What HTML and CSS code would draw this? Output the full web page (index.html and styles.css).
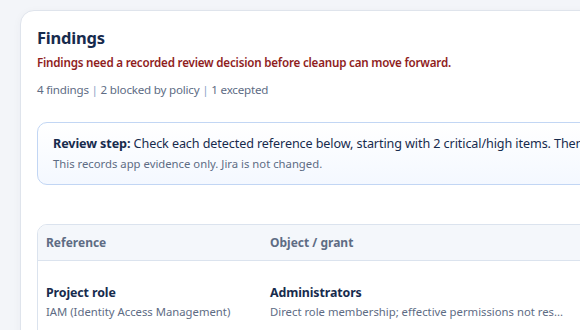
FILE: index.html
```html
<!DOCTYPE html>
<html lang="en">

<head>
    <meta charset="UTF-8" />
    <title>Findings</title>
    <link rel="stylesheet" href="styles.css">
</head>

<body>
    <div class="card">
        <h1>Findings</h1>
        <p class="warning">Findings need a recorded review decision before cleanup can move forward.</p>
        <p class="stats">4 findings <span class="sep">|</span> 2 blocked by policy <span class="sep">|</span> 1 excepted</p>

        <div class="step">
            <p class="step-main"><strong>Review step:</strong> Check each detected reference below, starting with 2 critical/high items. Then record a decision for each one.</p>
            <p class="step-note">This records app evidence only. Jira is not changed.</p>
        </div>

        <div class="table">
            <div class="row head">
                <div class="col-ref">Reference</div>
                <div class="col-obj">Object / grant</div>
            </div>
            <div class="row">
                <div class="col-ref">
                    <div class="cell-title">Project role</div>
                    <div class="cell-sub">IAM (Identity Access Management)</div>
                </div>
                <div class="col-obj">
                    <div class="cell-title">Administrators</div>
                    <div class="cell-sub">Direct role membership; effective permissions not res...</div>
                </div>
            </div>
        </div>
    </div>
</body>

</html>
```

FILE: styles.css
```css
body {
    margin: 0;
    font-family: 'Noto Sans', 'Open Sans', sans-serif;
    background: #f3f5f9;
    color: #172b4d;
    overflow: hidden;
}

/* Main panel */
.card {
    margin: 10px 0 0 20px;
    width: 900px;
    min-height: 400px;
    background: #fff;
    border: 1px solid #dfe4ec;
    border-radius: 14px;
    padding: 15px 16px 0 16px;
    box-sizing: border-box;
    box-shadow: 0 2px 10px rgba(23, 43, 77, 0.04);
}

h1 {
    margin: 0;
    font-size: 16.5px;
    font-weight: 700;
    letter-spacing: -0.2px;
    color: #172b4d;
    line-height: 24px;
}

.warning {
    margin: 4px 0 0 0;
    font-size: 11.6px;
    font-weight: 600;
    letter-spacing: -0.2px;
    color: #8f1d1d;
    line-height: 18px;
}

.stats {
    margin: 9px 0 0 0;
    font-size: 11.6px;
    letter-spacing: -0.2px;
    color: #5e6c84;
    line-height: 18px;
}

.sep {
    color: #8aa4c8;
}

.step {
    margin-top: 23px;
    border: 1px solid #c2d6f4;
    border-radius: 10px;
    background: linear-gradient(to bottom, #ffffff, #f4f8ff);
    padding: 11px 15px 11px 15px;
}

.step p {
    margin: 0;
    white-space: nowrap;
}

.step-main {
    font-size: 12.6px;
    letter-spacing: -0.1px;
    line-height: 20px;
    color: #172b4d;
}

.step-main strong {
    font-weight: 700;
}

.step-note {
    font-size: 11.3px;
    line-height: 19px;
    color: #5e6c84;
}

.table {
    margin-top: 39px;
    border: 1px solid #dbe3ee;
    border-radius: 10px;
    overflow: hidden;
}

.row {
    display: flex;
}

.row.head {
    background: #f4f7fb;
    border-bottom: 1px solid #dbe3ee;
    height: 35px;
    align-items: center;
    font-size: 12px;
    font-weight: 700;
    color: #5e6c84;
}

.col-ref {
    width: 232px;
    padding: 0 8px;
    box-sizing: border-box;
}

.col-obj {
    flex: 1;
}

.row:not(.head) {
    padding: 22px 0 30px 0;
}

.cell-title {
    font-size: 12.4px;
    font-weight: 700;
    letter-spacing: -0.1px;
    line-height: 20px;
    color: #172b4d;
}

.cell-sub {
    font-size: 11.3px;
    line-height: 17px;
    color: #5e6c84;
    white-space: nowrap;
}
```
